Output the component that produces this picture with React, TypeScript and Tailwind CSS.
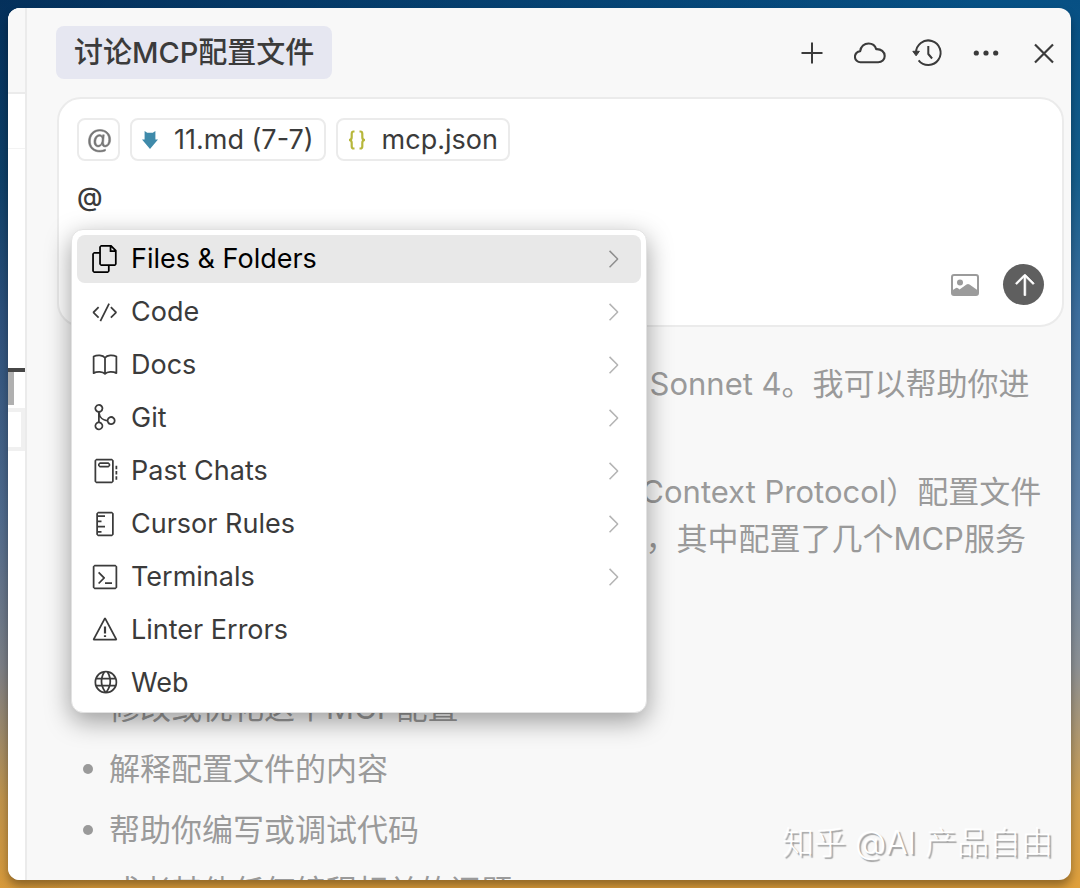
import type { ReactNode } from "react";
import {
  VscArrowUp,
  VscChevronRight,
  VscCode,
  VscFiles,
  VscGitMerge,
  VscGlobe,
  VscMention,
  VscNotebook,
  VscSymbolRuler,
  VscTerminal,
  VscWarning,
} from "react-icons/vsc";

type IconProps = { className?: string };

function StrokeIcon({ className, width = 2, children }: IconProps & { width?: number; children: ReactNode }) {
  return (
    <svg
      viewBox="0 0 32 32"
      className={className}
      fill="none"
      stroke="currentColor"
      strokeWidth={width}
      strokeLinejoin="round"
      aria-hidden="true"
    >
      {children}
    </svg>
  );
}

function AddIcon({ className }: IconProps) {
  return (
    <StrokeIcon className={className}>
      <path d="M16 5.500v21M5.500 16h21" />
    </StrokeIcon>
  );
}

function CloudIcon({ className }: IconProps) {
  return (
    <StrokeIcon className={className} width={2.1}>
      <path d="M6.700 25.200a5.500 5.500 0 0 1-.5-11C6.700 9.500 10.300 6.500 14.600 6.500c3.700 0 6.500 2 7.600 5.600 4.800-.3 8.500 2.600 8.500 6.800 0 3.700-2.900 6.300-6.500 6.300z" />
    </StrokeIcon>
  );
}

function HistoryIcon({ className }: IconProps) {
  return (
    <StrokeIcon className={className}>
      <path d="M4 16a12.300 12.300 0 1 1 2.600 7.300" />
      <path d="M16.300 9v8l3.800 4.500" />
      <path d="M.8 14.300h6.600L4.100 18.800z" fill="currentColor" strokeWidth="1" />
    </StrokeIcon>
  );
}

function MoreIcon({ className }: IconProps) {
  return (
    <svg viewBox="0 0 32 32" className={className} fill="currentColor" aria-hidden="true">
      <circle cx="6.300" cy="16" r="2.600" />
      <circle cx="16" cy="16" r="2.600" />
      <circle cx="25.700" cy="16" r="2.600" />
    </svg>
  );
}

function CloseIcon({ className }: IconProps) {
  return (
    <StrokeIcon className={className} width={2.2}>
      <path d="M7 7.500l18 18M25 7.500L7 25.500" />
    </StrokeIcon>
  );
}

function BookIcon({ className }: IconProps) {
  return (
    <StrokeIcon className={className} width={2}>
      <path d="M16 7.800C13.500 4.600 7 4.200 3 6.400v18.900c4-2.200 10.500-1.800 13 .8 2.500-2.600 9-3 13-.8V6.400c-4-2.200-10.500-1.800-13 1.400zM16 7.800v18" />
    </StrokeIcon>
  );
}

const headerActions = [
  { label: "New chat", Icon: AddIcon },
  { label: "Background agents", Icon: CloudIcon },
  { label: "History", Icon: HistoryIcon },
  { label: "More", Icon: MoreIcon },
  { label: "Close", Icon: CloseIcon },
];

const menuItems = [
  { label: "Files & Folders", Icon: VscFiles, nested: true },
  { label: "Code", Icon: VscCode, nested: true },
  { label: "Docs", Icon: BookIcon, nested: true },
  { label: "Git", Icon: VscGitMerge, nested: true },
  { label: "Past Chats", Icon: VscNotebook, nested: true },
  { label: "Cursor Rules", Icon: VscSymbolRuler, nested: true },
  { label: "Terminals", Icon: VscTerminal, nested: true },
  { label: "Linter Errors", Icon: VscWarning, nested: false },
  { label: "Web", Icon: VscGlobe, nested: false },
];

const suggestions = [
  "查看或编辑配置",
  "修改或优化这个MCP配置",
  "解释配置文件的内容",
  "帮助你编写或调试代码",
  "或者其他任何编程相关的问题",
];

function MarkdownIcon() {
  return (
    <svg viewBox="0 0 16 18" className="h-[18px] w-4" fill="#3f8aaa" aria-hidden="true">
      <path d="M2.600 0L5.200 1.800h5.600L13.400 0v8.600H16L8 18 0 8.600h2.600z" />
    </svg>
  );
}

function JsonIcon() {
  return (
    <svg viewBox="0 0 18 20" className="h-5 w-[18px]" fill="none" stroke="#b7b73b" strokeWidth="2.2" aria-hidden="true">
      <path d="M6.5 1.5H5.600Q3.700 1.500 3.700 3.800v3.400Q3.700 10 1 10q2.700 0 2.700 2.800v3.400q0 2.300 1.900 2.300h.9" />
      <path d="M11.500 1.500h.9q1.900 0 1.900 2.300v3.400Q14.300 10 17 10q-2.700 0-2.700 2.800v3.400q0 2.300-1.900 2.300h-.9" />
    </svg>
  );
}

function ImageIcon() {
  return (
    <svg viewBox="0 0 28 22" className="h-[22px] w-7" aria-hidden="true">
      <rect x="1" y="1" width="26" height="20" rx="2" fill="none" stroke="#9b9b9b" strokeWidth="2" />
      <circle cx="9" cy="8.500" r="3" fill="#9b9b9b" />
      <path d="M1 16.500l4-2.500q1-.5 2 .3l1.500 1.200 7-5q1.500-1 3 0l8.500 6V21H1z" fill="#9b9b9b" />
    </svg>
  );
}

function FileChip({ icon, children }: { icon: ReactNode; children: ReactNode }) {
  return (
    <button className="flex h-[43px] items-center gap-4 rounded-lg border-2 border-[#ebebeb] px-2.5 text-[27px] leading-8 text-[#3b3b3b]">
      {icon}
      {children}
    </button>
  );
}

function EditorSliver() {
  return (
    <div className="flex w-[19px] shrink-0 flex-col border-r-2 border-[#ebebeb] bg-white">
      <div className="h-[86px] border-b-2 border-[#ebebeb] bg-[#f8f8f8]" />
      <div className="h-[55px] border-b border-[#f3f3f3]" />
      <div className="mt-[219px] h-1 bg-[#474747]" />
      <div className="h-[33px] w-1.5 bg-[#b0b0b0]" />
      <div className="mt-[3px] h-[43px] border-y-4 border-r-4 border-[#f0f0f0]" />
    </div>
  );
}

function ContextMenu() {
  return (
    <div
      role="menu"
      className="absolute top-[130px] left-3 flex w-[576px] flex-col gap-[5px] rounded-xl border border-[#e2e2e2] bg-white p-[5px] shadow-[0_8px_26px_rgba(0,0,0,0.38)]"
    >
      {menuItems.map(({ label, Icon, nested }, index) => (
        <button
          key={label}
          role="menuitem"
          className={
            index === 0
              ? "flex h-12 items-center gap-3 rounded-lg bg-[#e8e8e8] px-3.5 text-left text-[27px] text-black"
              : "flex h-12 items-center gap-3 rounded-lg px-3.5 text-left text-[27px] text-[#3b3b3b]"
          }
        >
          <Icon className="size-7 shrink-0" />
          <span className="grow">{label}</span>
          {nested && (
            <VscChevronRight className={index === 0 ? "size-7 shrink-0 text-[#8f8f8f]" : "size-7 shrink-0 text-[#b4b4b4]"} />
          )}
        </button>
      ))}
    </div>
  );
}

function Composer() {
  return (
    <section className="relative z-10 mt-[18px] mr-[7px] ml-[30px] flex h-[230px] shrink-0 flex-col rounded-3xl border-2 border-[#ebebeb] bg-white px-[18px] pt-[19px]">
      <div className="flex gap-2.5">
        <button
          aria-label="Add context"
          className="flex size-[43px] items-center justify-center rounded-lg border-2 border-[#ebebeb] text-[#777777]"
        >
          <VscMention className="size-7" strokeWidth={0.3} />
        </button>
        <FileChip icon={<MarkdownIcon />}>11.md (7-7)</FileChip>
        <FileChip icon={<JsonIcon />}>mcp.json</FileChip>
      </div>
      <textarea
        aria-label="Message"
        defaultValue="@"
        className="mt-[18px] h-10 w-full resize-none bg-transparent text-[26px] leading-9 font-medium text-[#3b3b3b] outline-none"
      />
      <div className="mt-auto mb-5 flex items-center justify-end gap-6">
        <button aria-label="Attach image">
          <ImageIcon />
        </button>
        <button
          aria-label="Send"
          className="flex size-[41px] items-center justify-center rounded-full bg-[#5f5f5f] text-white"
        >
          <VscArrowUp className="size-7" strokeWidth={0.4} />
        </button>
      </div>
      <ContextMenu />
    </section>
  );
}

function Reply() {
  return (
    <article className="flex min-h-0 grow flex-col gap-3.5 overflow-hidden pt-[33px] pl-[52px] text-[31px] leading-[47px] whitespace-nowrap text-[#9a9a9a]">
      <p>
        你好！我是你的 AI 小助手，基于 Claude Sonnet 4。我可以帮助你进
        <br />
        行各种编程任务。
      </p>
      <p>
        我看到你现在正在查看一个MCP (Model Context Protocol）配置文件
        <br />
        这个文件位于项目MCP目录下的文件夹中，其中配置了几个MCP服务
        <br />
        器。你希望我做什么？
      </p>
      <ul className="flex flex-col gap-3.5">
        {suggestions.map((text) => (
          <li key={text} className="flex items-center gap-4">
            <span className="ml-1 size-2.5 shrink-0 rounded-full bg-[#9a9a9a]" />
            {text}
          </li>
        ))}
      </ul>
    </article>
  );
}

export default function App() {
  return (
    <div className="flex h-screen bg-[linear-gradient(135deg,rgba(0,0,30,0.4),rgba(0,0,0,0)_50%),linear-gradient(180deg,#075084_0%,#155f8d_20%,#3d6f9f_35%,#6384a8_58%,#8e9296_75%,#d0a050_90%,#e0a03c_100%)] py-2 pr-[9px] pl-2 font-['Inter','Noto_Sans_CJK_SC',sans-serif]">
      <div className="relative flex min-w-0 grow overflow-hidden rounded-xl bg-[#f8f8f8] shadow-[0_6px_10px_rgba(0,0,0,0.35)]">
        <EditorSliver />
        <main className="flex min-w-0 grow flex-col">
          <header className="flex items-center justify-between pt-[18px] pr-[11px] pl-[29px]">
            <h1 className="rounded-lg bg-[#e6e7f1] px-[18px] text-[29px] leading-[53px] font-medium text-[#3b3b3b]">
              讨论MCP配置文件
            </h1>
            <div className="flex gap-[26px]">
              {headerActions.map(({ label, Icon }) => (
                <button key={label} aria-label={label} className="text-[#3b3b3b]">
                  <Icon className="size-8" />
                </button>
              ))}
            </div>
          </header>
          <Composer />
          <Reply />
        </main>
        <p className="absolute right-[18px] bottom-[17px] text-[32px] leading-10 font-light text-white [text-shadow:2px_2px_1px_#a3a3a3]">
          知乎 @AI 产品自由
        </p>
      </div>
    </div>
  );
}
